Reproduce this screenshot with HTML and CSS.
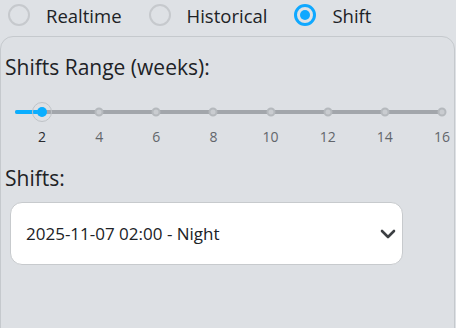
FILE: index.html
```html
<!DOCTYPE html>
<html lang="en">
<head>
    <meta charset="UTF-8">
    <meta name="viewport" content="width=device-width, initial-scale=1.0">
    <title>Shift Selector</title>
    <link rel="stylesheet" href="styles.css">
</head>
<body>

    <div class="mode-row">
        <label class="radio"><span class="radio-dot"></span>Realtime</label>
        <label class="radio"><span class="radio-dot"></span>Historical</label>
        <label class="radio checked"><span class="radio-dot"></span>Shift</label>
    </div>

    <div class="group-box">
        <div class="field-label">Shifts Range (weeks):</div>

        <div class="slider">
            <div class="track">
                <div class="track-fill"></div>
                <div class="ticks">
                    <span class="tick"></span>
                    <span class="tick"></span>
                    <span class="tick"></span>
                    <span class="tick"></span>
                    <span class="tick"></span>
                    <span class="tick"></span>
                    <span class="tick"></span>
                    <span class="tick"></span>
                    <span class="thumb"></span>
                </div>
            </div>
            <div class="tick-labels">
                <span class="current">2</span>
                <span>4</span>
                <span>6</span>
                <span>8</span>
                <span>10</span>
                <span>12</span>
                <span>14</span>
                <span>16</span>
            </div>
        </div>

        <div class="field-label shifts-label">Shifts:</div>

        <div class="select">
            <span>2025-11-07 02:00 - Night</span>
            <svg class="chevron" width="16" height="10" viewBox="0 0 16 10">
                <path d="M2 2 L8 8 L14 2" fill="none" stroke="#3c3f43" stroke-width="2.6" stroke-linecap="round" stroke-linejoin="round"/>
            </svg>
        </div>
    </div>

</body>
</html>
```

FILE: styles.css
```css
body {
    margin: 0;
    font-family: "Open Sans", "Noto Sans", sans-serif;
    background-color: #dee1e5;
    color: #202226;
    overflow: hidden;
}

/* mode radios */
.mode-row {
    display: flex;
    align-items: center;
    height: 36px;
    padding-left: 8px;
    font-size: 18.5px;
}

.radio {
    display: flex;
    align-items: center;
    margin-right: 27px;
    margin-top: -5px;
}

.radio-dot {
    width: 18px;
    height: 18px;
    border: 2px solid #c6c9cd;
    border-radius: 50%;
    margin-right: 16px;
    margin-top: -2px;
    box-sizing: content-box;
}

.checked .radio-dot {
    border: 3px solid #0fa8ff;
    width: 16px;
    height: 16px;
    position: relative;
}

.checked .radio-dot::after {
    content: "";
    position: absolute;
    left: 3px;
    top: 3px;
    width: 10px;
    height: 10px;
    border-radius: 50%;
    background-color: #0fa8ff;
}

/* group box */
.group-box {
    width: 453px;
    height: 289px;
    border: 1px solid #c5c9cd;
    border-radius: 13px;
    background-color: #dde0e4;
    padding-top: 16px;
}

.field-label {
    font-size: 21px;
    padding-left: 4px;
    line-height: 28px;
}

/* slider */
.slider {
    margin-left: 14px;
    width: 427px;
    margin-top: 29px;
}

.track {
    position: relative;
    height: 4px;
    background-color: #a2a6ab;
    border-radius: 2px;
}

.track-fill {
    position: absolute;
    left: 0;
    top: 0;
    width: 27px;
    height: 4px;
    background-color: #0aaeff;
    border-radius: 2px;
}

.ticks {
    position: absolute;
    left: 27px;
    right: 0;
    top: 2px;
}

.tick {
    position: absolute;
    width: 5px;
    height: 5px;
    border: 2px solid #b5b9bd;
    background-color: #c9ccd0;
    border-radius: 50%;
    transform: translate(-50%, -50%);
}

.tick:nth-child(1) { left: 0; }
.tick:nth-child(2) { left: 14.2857%; }
.tick:nth-child(3) { left: 28.5714%; }
.tick:nth-child(4) { left: 42.8571%; }
.tick:nth-child(5) { left: 57.1429%; }
.tick:nth-child(6) { left: 71.4286%; }
.tick:nth-child(7) { left: 85.7143%; }
.tick:nth-child(8) { left: 100%; }

.thumb {
    position: absolute;
    left: 0;
    width: 18px;
    height: 18px;
    border: 1px solid #bfc3c7;
    border-radius: 50%;
    transform: translate(-50%, -50%);
}

.thumb::after {
    content: "";
    position: absolute;
    left: 4px;
    top: 4px;
    width: 10px;
    height: 10px;
    border-radius: 50%;
    background-color: #0aaeff;
}

.tick-labels {
    position: relative;
    height: 20px;
    margin-left: 27px;
    margin-top: 13px;
    font-size: 14px;
    color: #62666b;
}

.tick-labels span {
    position: absolute;
    transform: translateX(-50%);
}

.tick-labels span:nth-child(1) { left: 0; }
.tick-labels span:nth-child(2) { left: 14.2857%; }
.tick-labels span:nth-child(3) { left: 28.5714%; }
.tick-labels span:nth-child(4) { left: 42.8571%; }
.tick-labels span:nth-child(5) { left: 57.1429%; }
.tick-labels span:nth-child(6) { left: 71.4286%; }
.tick-labels span:nth-child(7) { left: 85.7143%; }
.tick-labels span:nth-child(8) { left: 100%; }

.tick-labels .current {
    color: #2a2c30;
}

/* shift select */
.shifts-label {
    margin-top: 17px;
}

.select {
    display: flex;
    align-items: center;
    justify-content: space-between;
    width: 393px;
    height: 63px;
    margin-left: 9px;
    margin-top: 10px;
    padding: 0 6px 0 15px;
    box-sizing: border-box;
    background-color: #ffffff;
    border: 1px solid #c7cacd;
    border-radius: 12px;
    font-size: 17px;
}
```
